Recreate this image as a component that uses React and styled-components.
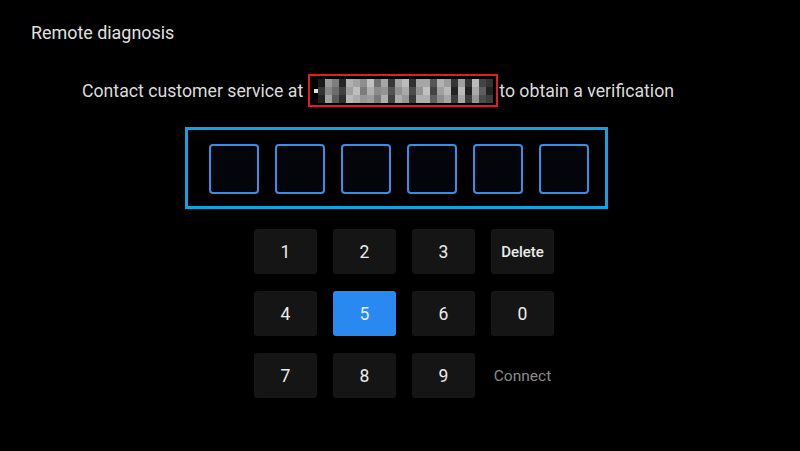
import React from "react";
import styled, { createGlobalStyle } from "styled-components";

const GlobalStyle = createGlobalStyle`
  html, body {
    margin: 0;
    padding: 0;
    background: #000;
  }
  body {
    font-family: Roboto, "Noto Sans", "Liberation Sans", sans-serif;
    color: #e2e2e2;
  }
`;

const Screen = styled.div`
  width: 800px;
  height: 451px;
  background: #000;
  display: flex;
  flex-direction: column;
  overflow: hidden;
`;

const Title = styled.div`
  font-size: 17.9px;
  line-height: 20px;
  color: #e0e0e0;
  padding: 23px 0 0 31px;
`;

const ContactRow = styled.div`
  display: flex;
  align-items: center;
  margin: 31px 0 0 82px;
  font-size: 17.7px;
  color: #dcdcdc;
  white-space: nowrap;
`;

const PhoneFrame = styled.div`
  width: 186px;
  height: 29px;
  border: 2px solid #e31b23;
  margin: 0 1px 0 5px;
  display: flex;
  align-items: center;
  justify-content: flex-start;
  padding-left: 0;
  box-sizing: content-box;
`;

const CodeFrame = styled.div`
  align-self: flex-start;
  box-sizing: border-box;
  margin: 20px 0 0 185px;
  width: 423px;
  height: 82px;
  border: 3px solid #0ea3e3;
  padding: 14px 0 0 21px;
  display: flex;
  gap: 16px;
`;

const CodeBox = styled.div`
  box-sizing: border-box;
  width: 50px;
  height: 50px;
  border: 2px solid #3a8de4;
  border-radius: 4px;
  background: #04050b;
`;

const Keypad = styled.div`
  align-self: flex-start;
  margin: 20px 0 0 254px;
  display: grid;
  grid-template-columns: repeat(4, 63px);
  grid-auto-rows: 45px;
  column-gap: 16px;
  row-gap: 17px;
`;

const Key = styled.div`
  display: flex;
  align-items: center;
  justify-content: center;
  border-radius: 3px;
  font-size: ${(p) => (p.$word ? "15px" : p.$plain ? "15.5px" : "17.5px")};
  font-weight: ${(p) => (p.$word ? 500 : 400)};
  background: ${(p) => (p.$active ? "#2a89f0" : p.$plain ? "transparent" : "#151515")};
  color: ${(p) => (p.$plain ? "#8a8a8a" : "#ececec")};
`;

const grays = [
  "#2a2a2a", "#9a9a9a", "#6c6c6c", "#2e2e2e", "#a8a8a8", "#b5b5b5", "#8e8e8e", "#b0b0b0",
  "#7a7a7a", "#9e9e9e", "#4a4a4a", "#a4a4a4", "#aaaaaa", "#3a3a3a", "#9c9c9c", "#b8b8b8",
  "#565656", "#a0a0a0", "#a6a6a6", "#2c2c2c", "#b2b2b2", "#333333", "#a9a9a9", "#4c4c4c",
  "#2b2b2b",
];

function Mosaic() {
  const cols = 25;
  const rows = 3;
  const cells = [];
  for (let r = 0; r < rows; r++) {
    for (let c = 0; c < cols; c++) {
      const base = parseInt(grays[c].slice(1, 3), 16);
      const shift = ((c * 7 + r * 13) % 5) * 9 - 18;
      const v = Math.max(25, Math.min(210, base + shift));
      const hex = v.toString(16).padStart(2, "0");
      cells.push(
        <rect key={r + "-" + c} x={c * 7 + 8} y={r * 8} width="7" height="8" fill={"#" + hex + hex + hex} />
      );
    }
  }
  return (
    <svg width="186" height="24" viewBox="0 0 186 24">
      {cells}
      <rect x="4" y="10" width="4" height="4" fill="#e0e0e0" />
    </svg>
  );
}

const keys = [
  { label: "1" }, { label: "2" }, { label: "3" }, { label: "Delete", word: true },
  { label: "4" }, { label: "5", active: true }, { label: "6" }, { label: "0" },
  { label: "7" }, { label: "8" }, { label: "9" }, { label: "Connect", plain: true },
];

export default function App() {
  return (
    <Screen>
      <GlobalStyle />
      <Title>Remote diagnosis</Title>
      <ContactRow>
        Contact customer service at
        <PhoneFrame>
          <Mosaic />
        </PhoneFrame>
        to obtain a verification
      </ContactRow>
      <CodeFrame>
        {[0, 1, 2, 3, 4, 5].map((i) => (
          <CodeBox key={i} />
        ))}
      </CodeFrame>
      <Keypad>
        {keys.map((k) => (
          <Key key={k.label} $active={k.active} $plain={k.plain} $word={k.word}>
            {k.label}
          </Key>
        ))}
      </Keypad>
    </Screen>
  );
}
